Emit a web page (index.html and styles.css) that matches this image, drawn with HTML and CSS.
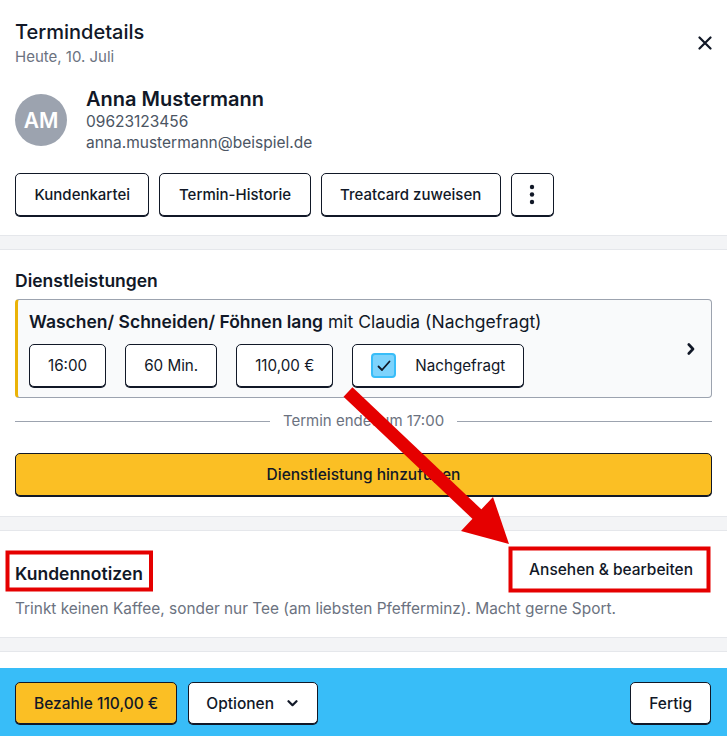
FILE: index.html
```html
<!DOCTYPE html>
<html lang="de">
<head>
    <meta charset="UTF-8">
    <meta name="viewport" content="width=device-width, initial-scale=1.0">
    <title>Termindetails</title>
    <link rel="stylesheet" href="styles.css">
</head>
<body>
    <div class="panel">
        <div class="content">
            <section class="top">
                <div class="title-row">
                    <div>
                        <h1 class="title">Termindetails</h1>
                        <p class="subtitle">Heute, 10. Juli</p>
                    </div>
                    <button class="close" aria-label="Schließen">
                        <svg width="14" height="14" viewBox="0 0 14 14"><path d="M1.5 1.5L12.5 12.5M12.5 1.5L1.5 12.5" stroke="#111827" stroke-width="2.2" stroke-linecap="round"/></svg>
                    </button>
                </div>

                <div class="client">
                    <div class="avatar">AM</div>
                    <div class="client-info">
                        <div class="client-name">Anna Mustermann</div>
                        <div class="client-meta">09623123456</div>
                        <div class="client-meta">anna.mustermann@beispiel.de</div>
                    </div>
                </div>

                <div class="actions">
                    <button class="btn">Kundenkartei</button>
                    <button class="btn">Termin-Historie</button>
                    <button class="btn">Treatcard zuweisen</button>
                    <button class="btn btn-square" aria-label="Mehr">
                        <svg width="6" height="22" viewBox="0 0 6 22"><circle cx="3" cy="3" r="2.2" fill="#111827"/><circle cx="3" cy="10.5" r="2.2" fill="#111827"/><circle cx="3" cy="18" r="2.2" fill="#111827"/></svg>
                    </button>
                </div>
            </section>

            <div class="band"></div>

            <section class="services">
                <h2 class="section-title">Dienstleistungen</h2>
                <div class="service-card">
                    <div class="service-body">
                        <div class="service-name"><strong>Waschen/ Schneiden/ Föhnen lang</strong> mit Claudia (Nachgefragt)</div>
                        <div class="chips">
                            <div class="chip">16:00</div>
                            <div class="chip">60 Min.</div>
                            <div class="chip">110,00 €</div>
                            <div class="chip chip-check">
                                <span class="checkbox">
                                    <svg width="14" height="12" viewBox="0 0 14 12"><path d="M1.5 6.5L5 10L12.5 1.5" fill="none" stroke="#111827" stroke-width="1.8" stroke-linecap="round" stroke-linejoin="round"/></svg>
                                </span>
                                Nachgefragt
                            </div>
                        </div>
                    </div>
                    <svg class="chevron" width="8" height="12" viewBox="0 0 8 12"><path d="M1.8 1.5L6 6L1.8 10.5" fill="none" stroke="#111827" stroke-width="2.6" stroke-linecap="round" stroke-linejoin="round"/></svg>
                </div>

                <div class="divider"><span>Termin endet um 17:00</span></div>

                <button class="btn btn-yellow btn-wide">Dienstleistung hinzufügen</button>
            </section>

            <div class="band"></div>

            <section class="notes">
                <div class="notes-head">
                    <h2 class="section-title">Kundennotizen</h2>
                    <button class="link-btn">Ansehen &amp; bearbeiten</button>
                </div>
                <p class="notes-text">Trinkt keinen Kaffee, sonder nur Tee (am liebsten Pfefferminz). Macht gerne Sport.</p>
            </section>

            <div class="band"></div>
        </div>

        <footer class="footer">
            <button class="btn btn-yellow">Bezahle 110,00 €</button>
            <button class="btn btn-options">
                Optionen
                <svg width="11" height="7" viewBox="0 0 11 7"><path d="M1.5 1.2L5.5 5.2L9.5 1.2" fill="none" stroke="#111827" stroke-width="2.2" stroke-linecap="round" stroke-linejoin="round"/></svg>
            </button>
            <button class="btn btn-done">Fertig</button>
        </footer>

        <!-- Markierungen -->
        <svg class="annotations" width="727" height="736" viewBox="0 0 727 736">
            <line x1="348" y1="392" x2="480" y2="517" stroke="#e50000" stroke-width="13"/>
            <polygon points="509,544 461,531 493,497" fill="#e50000"/>
            <rect x="7.5" y="552.5" width="143.5" height="37" fill="none" stroke="#e50000" stroke-width="4"/>
            <rect x="510.5" y="548.5" width="198" height="42" fill="none" stroke="#e50000" stroke-width="4"/>
        </svg>
    </div>
</body>
</html>
```

FILE: styles.css
```css
* {
    box-sizing: border-box;
}

body {
    margin: 0;
    font-family: Inter, "Noto Sans", sans-serif;
    color: #111827;
    background-color: #fff;
}

.panel {
    position: relative;
    height: 100vh;
    display: flex;
    flex-direction: column;
    overflow: hidden;
}

.content {
    flex: 1;
    overflow: hidden;
}

h1, h2, p {
    margin: 0;
}

button {
    font-family: inherit;
    color: inherit;
}

.top {
    padding: 20px 15px 19px;
}

.title-row {
    display: flex;
    justify-content: space-between;
    align-items: flex-start;
}

.title {
    font-size: 20px;
    line-height: 24px;
    font-weight: 500;
}

.subtitle {
    margin-top: 3px;
    font-size: 15px;
    line-height: 20px;
    color: #6b7280;
}

.close {
    margin-top: 16px;
    padding: 0;
    border: none;
    background: none;
    display: flex;
}

.client {
    display: flex;
    align-items: center;
    gap: 19px;
    margin-top: 20px;
}

.avatar {
    width: 52px;
    height: 52px;
    border-radius: 50%;
    background-color: #9ca3af;
    color: #fff;
    font-size: 21px;
    font-weight: 600;
    display: flex;
    align-items: center;
    justify-content: center;
}

.client-name {
    font-size: 20px;
    line-height: 24px;
    font-weight: 600;
}

.client-meta {
    font-size: 15.5px;
    line-height: 21px;
    color: #4b5563;
}

.actions {
    display: flex;
    gap: 10px;
    margin-top: 20px;
}

.btn {
    height: 43px;
    padding: 0 18px;
    font-size: 15.5px;
    font-weight: 500;
    background-color: #fff;
    border: 1px solid #111827;
    border-radius: 5px;
    box-shadow: 0 1px 0 #111827;
    display: inline-flex;
    align-items: center;
    justify-content: center;
    cursor: pointer;
}

.actions .btn {
    padding: 0 18.5px;
    font-size: 15px;
}

.actions .btn-square {
    width: 43px;
    padding: 0;
}

.btn-yellow {
    background-color: #fbbf24;
}

.btn-wide {
    width: 100%;
}

.band {
    height: 15px;
    background-color: #f3f4f6;
    border-top: 1px solid #e5e7eb;
    border-bottom: 1px solid #e5e7eb;
}

.services {
    padding: 20px 15px;
}

.section-title {
    font-size: 17.5px;
    line-height: 22px;
    font-weight: 600;
}

.service-card {
    margin-top: 7px;
    display: flex;
    align-items: center;
    background-color: #f9fafb;
    border: 1px solid #9ca3af;
    border-left: 3px solid #eab308;
    border-radius: 4px;
    padding: 11px 16px 10px 11px;
}

.service-body {
    flex: 1;
}

.service-name {
    font-size: 17.5px;
    line-height: 22px;
}

.service-name strong {
    font-weight: 600;
}

.chips {
    display: flex;
    gap: 19px;
    margin-top: 11px;
}

.chip {
    height: 43px;
    padding: 0 18px;
    font-size: 15.2px;
    background-color: #fff;
    border: 1px solid #111827;
    border-radius: 5px;
    box-shadow: 0 1px 0 #111827;
    display: flex;
    align-items: center;
}

.chip-check {
    gap: 19px;
}

.checkbox {
    width: 25px;
    height: 25px;
    border-radius: 4px;
    background-color: #7dd3fc;
    border: 2px solid #38bdf8;
    display: flex;
    align-items: center;
    justify-content: center;
}

.divider {
    margin-top: 13px;
    display: flex;
    align-items: center;
    gap: 13px;
    font-size: 15px;
    line-height: 20px;
    color: #6b7280;
}

.divider::before,
.divider::after {
    content: "";
    flex: 1;
    height: 1px;
    background-color: #9ca3af;
}

.services .btn-wide {
    margin-top: 22px;
}

.notes {
    padding: 17px 15px 18px;
}

.notes-head {
    display: flex;
    justify-content: space-between;
    align-items: flex-end;
}

.notes-head .section-title {
    margin-bottom: 6px;
}

.link-btn {
    height: 43px;
    padding: 0 19px;
    border: none;
    background: none;
    font-size: 15.5px;
    font-weight: 500;
}

.notes-text {
    margin-top: 8px;
    font-size: 15.4px;
    line-height: 20px;
    color: #6b7280;
}

.footer {
    height: 68px;
    padding: 14px 16px 12px 15px;
    background-color: #38bdf8;
    display: flex;
    gap: 11px;
}

.footer .btn {
    height: 42px;
}

.btn-options {
    padding: 0 19px 0 17px;
    gap: 13px;
}

.btn-done {
    margin-left: auto;
}

.annotations {
    position: absolute;
    top: 0;
    left: 0;
    pointer-events: none;
}
```
